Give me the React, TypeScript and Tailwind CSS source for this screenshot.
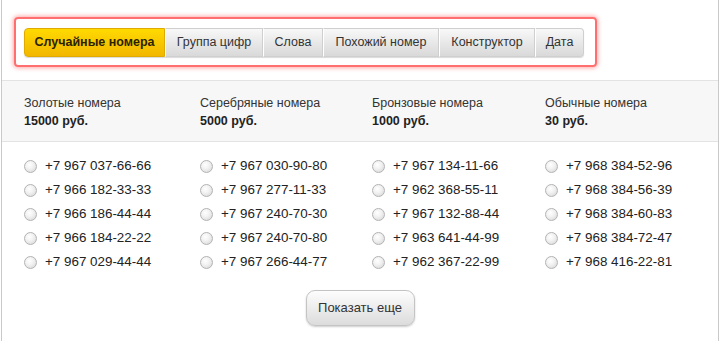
import React from "react";

const tabs = [
  { t: "Случайные номера", w: "w-[141px]" },
  { t: "Группа цифр", w: "w-[98px]" },
  { t: "Слова", w: "w-[60px]" },
  { t: "Похожий номер", w: "w-[116px]" },
  { t: "Конструктор", w: "w-[96px]" },
  { t: "Дата", w: "w-[49px]" },
];

const cols = [
  { title: "Золотые номера", price: "15000 руб.", nums: ["+7 967 037-66-66", "+7 966 182-33-33", "+7 966 186-44-44", "+7 966 184-22-22", "+7 967 029-44-44"] },
  { title: "Серебряные номера", price: "5000 руб.", nums: ["+7 967 030-90-80", "+7 967 277-11-33", "+7 967 240-70-30", "+7 967 240-70-80", "+7 967 266-44-77"] },
  { title: "Бронзовые номера", price: "1000 руб.", nums: ["+7 967 134-11-66", "+7 962 368-55-11", "+7 967 132-88-44", "+7 963 641-44-99", "+7 962 367-22-99"] },
  { title: "Обычные номера", price: "30 руб.", nums: ["+7 968 384-52-96", "+7 968 384-56-39", "+7 968 384-60-83", "+7 968 384-72-47", "+7 968 416-22-81"] },
];

function Radio() {
  return (
    <span className="inline-block w-[13px] h-[13px] rounded-full border border-[#b3b3b3] bg-[radial-gradient(circle_at_40%_35%,#ffffff_0%,#f2f2f2_40%,#d4d4d4_100%)] shrink-0" />
  );
}

export default function App() {
  return (
    <div
      className="ml-[1px] w-[718px] h-[341px] border-x border-[#c9c9c9] bg-white text-[#333]"
      style={{ fontFamily: '"Liberation Sans", Arial, sans-serif' }}
    >
      <div className="h-[80px] pt-[17px] pl-[12px]">
        <div className="w-[583px] h-[50px] border-2 border-[#ff6f6f] rounded-[4px] shadow-[0_0_4px_1px_rgba(255,110,110,0.6)] pt-[9px] pl-[8px]">
          <div className="flex h-[29px] w-fit rounded-[4px] shadow-[0_1px_1px_rgba(0,0,0,0.15)]">
            {tabs.map((t, i) => (
              <div
                key={t.t}
                className={
                  i === 0
                    ? `${t.w} flex items-center justify-center text-[12.5px] font-bold text-[#2b2200] rounded-l-[4px] border border-[#e0aa00] bg-gradient-to-b from-[#ffd900] to-[#f2b700]`
                    : `${t.w} flex items-center justify-center text-[12.5px] text-[#333] border-y border-r border-[#cfcfcf] border-l border-l-white bg-gradient-to-b from-[#f8f8f8] to-[#d9d9d9] last:rounded-r-[4px]`
                }
              >
                {t.t}
              </div>
            ))}
          </div>
        </div>
      </div>

      <div className="h-[62px] border-y border-[#e3e3e3] bg-[#f7f7f7] grid grid-cols-[176px_172px_173px_1fr] pl-[22px] pt-[13px] text-[12.5px] leading-[18px]">
        {cols.map((c) => (
          <div key={c.title}>
            <div className="text-[#333]">{c.title}</div>
            <div className="font-bold text-[#222]">{c.price}</div>
          </div>
        ))}
      </div>

      <div className="grid grid-cols-[176px_172px_173px_1fr] pl-[22px] pt-[12px]">
        {cols.map((c) => (
          <div key={c.title} className="flex flex-col">
            {c.nums.map((n) => (
              <div key={n} className="flex items-center h-[24px] gap-[8px] text-[13.4px] text-[#222]">
                <Radio />
                <span>{n}</span>
              </div>
            ))}
          </div>
        ))}
      </div>

      <div className="flex justify-center pt-[16px]">
        <button className="w-[109px] h-[36px] rounded-[9px] border border-[#c4c4c4] bg-gradient-to-b from-[#fdfdfd] to-[#dcdcdc] shadow-[0_1px_2px_rgba(0,0,0,0.2)] text-[13px] text-[#333]">
          Показать еще
        </button>
      </div>
    </div>
  );
}
